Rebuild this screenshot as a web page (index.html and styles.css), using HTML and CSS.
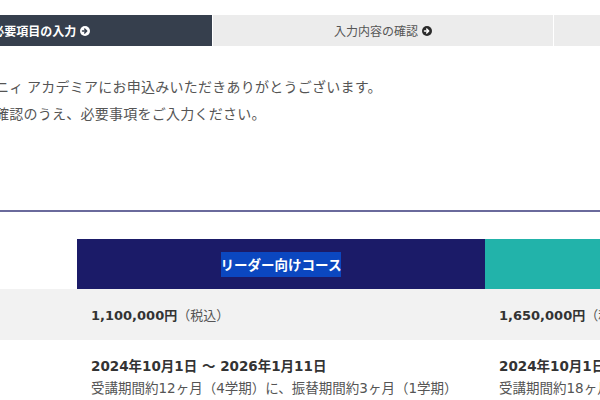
FILE: index.html
```html
<!DOCTYPE html>
<html lang="ja">
<head>
<meta charset="utf-8">
<title>お申込み</title>
<link rel="stylesheet" href="styles.css">
</head>
<body>
<div class="wrap">
  <ol class="steps">
    <li class="step step-current">必要項目の入力
      <svg class="arrow" viewBox="0 0 16 16" width="10" height="10"><circle cx="8" cy="8" r="8" fill="#fff"/><path d="M4 8h6M7.5 4.8 10.7 8 7.5 11.2" stroke="#363f4d" stroke-width="2.4" fill="none" stroke-linecap="round" stroke-linejoin="round"/></svg>
    </li>
    <li class="step">入力内容の確認
      <svg class="arrow" viewBox="0 0 16 16" width="10" height="10"><circle cx="8" cy="8" r="8" fill="#2b2b2b"/><path d="M4 8h6M7.5 4.8 10.7 8 7.5 11.2" stroke="#fff" stroke-width="2.4" fill="none" stroke-linecap="round" stroke-linejoin="round"/></svg>
    </li>
    <li class="step">送信完了</li>
  </ol>

  <div class="intro">
    <p>ニィ アカデミアにお申込みいただきありがとうございます。</p>
    <p>確認のうえ、必要事項をご入力ください。</p>
  </div>

  <hr class="rule">

  <div class="courses">
    <div class="row row-head">
      <div class="label"></div>
      <div class="cell head-navy"><span class="sel">リーダー向けコース</span></div>
      <div class="cell head-teal"><span>エグゼクティブコース</span></div>
    </div>
    <div class="row row-price">
      <div class="label">受講料</div>
      <div class="cell"><b>1,100,000円</b>（税込）</div>
      <div class="cell"><b>1,650,000円</b>（税込）</div>
    </div>
    <div class="row row-date">
      <div class="label">受講期間</div>
      <div class="cell"><b>2024年10月1日 ～ 2026年1月11日</b><br>受講期間約12ヶ月（4学期）に、振替期間約3ヶ月（1学期）</div>
      <div class="cell"><b>2024年10月1日 ～ 2026年7月11日</b><br>受講期間約18ヶ月（6学期）に、振替期間約3ヶ月（1学期）</div>
    </div>
  </div>
</div>
</body>
</html>
```

FILE: styles.css
```css
html, body {
  margin: 0;
  padding: 0;
  background: #fff;
  overflow: hidden;
}
body {
  font-family: "DejaVu Sans", "Noto Sans CJK JP", sans-serif;
  color: #555;
}
.wrap {
  width: 1024px;
  margin-left: -129px;
}
.steps {
  list-style: none;
  margin: 15px 0 0;
  padding: 0;
  display: flex;
  gap: 1px;
}
.step {
  flex: 1;
  height: 31px;
  display: flex;
  align-items: center;
  justify-content: center;
  gap: 4px;
  background: #ececec;
  color: #555;
  font-size: 12px;
  font-family: "Noto Sans CJK JP", sans-serif;
}
.step-current {
  background: #363f4d;
  color: #fff;
  font-weight: bold;
}
.arrow {
  display: block;
  margin-top: 1px;
}
.intro {
  padding: 27px 0 0 124px;
  font-size: 14px;
  line-height: 27px;
  letter-spacing: 0.25px;
  font-family: "Noto Sans CJK JP", sans-serif;
  color: #555;
}
.intro p {
  margin: 0;
}
.rule {
  margin: 83px 0 0;
  border: 0;
  height: 2px;
  background: #6a6a9c;
}
.courses {
  margin-top: 27px;
}
.row {
  display: flex;
}
.label {
  width: 206px;
  flex: none;
  color: transparent;
}
.cell {
  width: 408px;
  flex: none;
  box-sizing: border-box;
  padding: 0 14px;
}
.row-head .cell {
  height: 50px;
  display: flex;
  align-items: center;
  justify-content: center;
  color: #fff;
  font-weight: bold;
  font-size: 13.5px;
  font-family: "Noto Sans CJK JP", sans-serif;
}
.head-navy {
  background: #1b1b68;
}
.head-teal {
  background: #22b3aa;
}
.sel {
  background: #0b47c0;
  line-height: 25px;
  display: inline-block;
}
.row-price {
  background: #f2f2f2;
  height: 51px;
  align-items: center;
  font-size: 13px;
}
.row-price b {
  color: #333;
}
.row-date {
  padding-top: 15px;
  font-size: 13.5px;
  line-height: 22px;
}
.row-date b {
  color: #333;
}
```
